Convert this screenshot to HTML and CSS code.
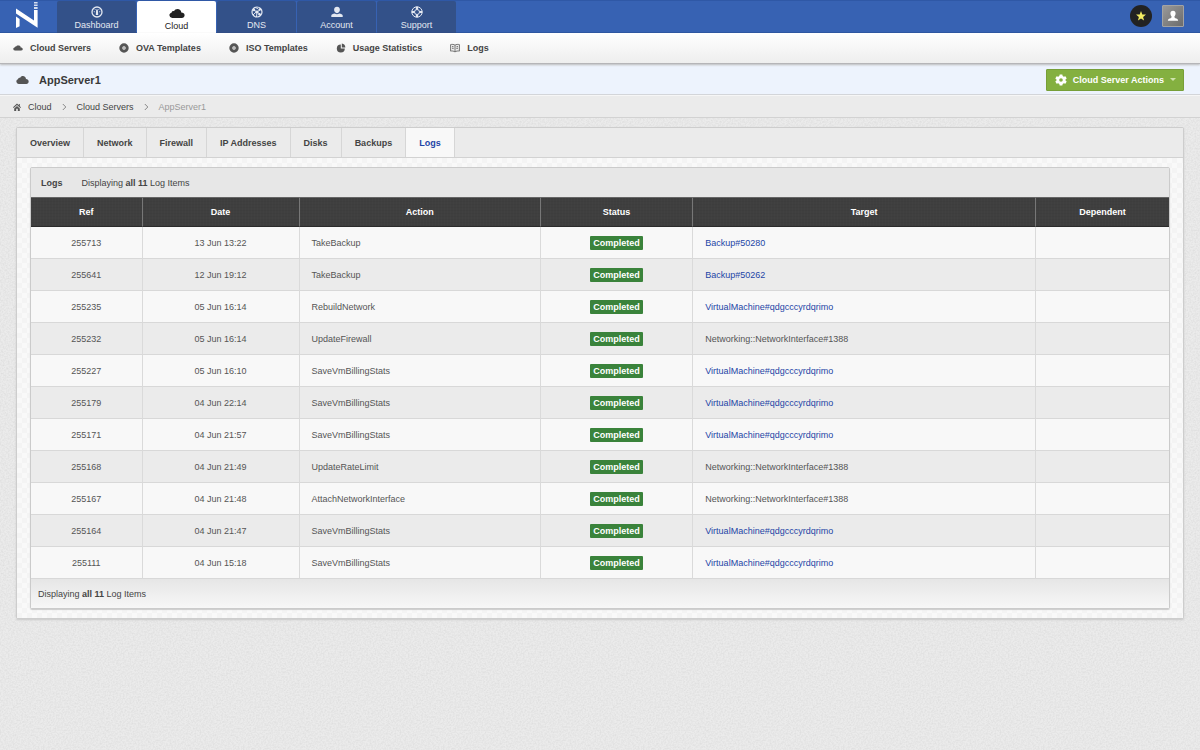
FILE: index.html
```html
<!DOCTYPE html>
<html lang="en">
<head>
<meta charset="utf-8">
<title>AppServer1 - Logs</title>
<link rel="stylesheet" href="styles.css">
</head>
<body>
<svg class="defs" aria-hidden="true">
  <symbol id="cloud" viewBox="0 0 16 9"><path d="M3.6 9A3.1 3.1 0 0 1 .4 6.2C.4 4.9 1.300 4 2.500 3.700 2.700 2.400 4 1.800 5 2.200 5.700.8 7 .1 8.500.1c2.100 0 3.700 1.500 3.800 3.400 1.900 0 3.300 1.100 3.300 2.700S14.400 9 12.800 9z"/></symbol>
  <symbol id="disc" viewBox="0 0 10 10"><circle cx="5" cy="5" r="3.200" fill="none" stroke="#555" stroke-width="3"/><circle cx="5" cy="5" r=".7"/></symbol>
</svg>

<header class="topbar">
  <a class="logo" href="#" aria-label="Home">
    <svg width="24" height="30" viewBox="0 0 24 30"><g fill="#fff"><path d="M1 8.500L19 20.500V10h3.600v17.800L1 13.500z"/><path d="M1 16.500l3.600 2.400v7.300L1 28z"/><path d="M19 7h3.600v2H19zM19 4.500h3.600V6H19zM19 2h3.600v1.500H19z" opacity=".8"/></g></svg>
  </a>
  <nav class="main-nav">
    <a href="#"><svg width="12" height="12" viewBox="0 0 12 12"><circle cx="6" cy="6" r="5" fill="none" stroke="currentColor" stroke-width="1.300"/><path fill="currentColor" d="M5.200 3.500h1.600L7.200 9H4.800z"/><path d="M2.800 5.500l1 .4M4 3.200l.4.700M8 3.200l-.4.700M9.200 5.500l-1 .4" stroke="currentColor"/></svg>Dashboard</a>
    <a href="#" class="active"><svg width="16" height="12" viewBox="0 -2 16 12" fill="currentColor"><use href="#cloud" width="16" height="9"/></svg>Cloud</a>
    <a href="#"><svg width="12" height="12" viewBox="0 0 12 12" fill="none" stroke="currentColor"><circle cx="6" cy="6" r="5" stroke-width="1.200"/><path d="M2 3.500l4 2.500 4-2.800M6 6l-.5 5M2 9l3.500-3.300M6 6l4 2.800M4 1.500l3 1"/><g fill="currentColor" stroke="none"><circle cx="6" cy="6" r="1.400"/><circle cx="3" cy="4" r="1.200"/><circle cx="8.700" cy="3.500" r="1.200"/><circle cx="8.500" cy="8.300" r="1.200"/></g></svg>DNS</a>
    <a href="#"><svg width="12" height="12" viewBox="0 0 12 12" fill="currentColor"><path d="M6 .8c1.800 0 2.900 1.300 2.900 3S7.700 7.200 6 7.200 3.100 5.500 3.100 3.800 4.200.8 6 .8zM.3 11V9.600C.3 8.500 2 7.700 3.800 7.500c1.200 1 3.200 1 4.400 0 1.800.2 3.500 1 3.500 2.100V11z"/></svg>Account</a>
    <a href="#"><svg width="12" height="12" viewBox="0 0 12 12" fill="none" stroke="currentColor"><circle cx="6" cy="6" r="5.200"/><circle cx="6" cy="6" r="2.500"/><path stroke-width="2.200" d="M6 .8v2.700M6 8.500v2.700M.8 6h2.700M8.500 6h2.700"/></svg>Support</a>
  </nav>
  <div class="user-tools">
    <button class="star" aria-label="Favourites"><svg width="10" height="10" viewBox="0 0 10 10"><path fill="#f2ec62" d="M5 0l1.300 3.500 3.700.1-2.900 2.300 1 3.700L5 7.500 1.900 9.600l1-3.700L0 3.600l3.700-.1z"/></svg></button>
    <button class="avatar" aria-label="Profile"><svg width="12" height="12" viewBox="0 0 12 12"><path fill="#fff" d="M6 .7c1.700 0 2.700 1.200 2.600 2.900C8.500 5 8 6 7.400 6.600c0 1.300.4 1.500 1.900 2 1 .3 1.700.9 1.800 2.200H.9C1 9.500 1.700 8.900 2.700 8.600c1.500-.5 1.900-.7 1.900-2C4 6 3.500 5 3.400 3.600 3.300 1.900 4.300.7 6 .7z"/></svg></button>
  </div>
</header>

<nav class="sub-nav">
  <a href="#"><svg width="10" height="10" viewBox="0 -3 16 15"><use href="#cloud" width="16" height="9"/></svg>Cloud Servers</a>
  <a href="#"><svg width="10" height="10"><use href="#disc"/></svg>OVA Templates</a>
  <a href="#"><svg width="10" height="10"><use href="#disc"/></svg>ISO Templates</a>
  <a href="#"><svg width="10" height="10" viewBox="0 0 10 10"><path d="M4.800 1.400v4h4A4 4 0 1 1 4.800 1.400z"/><path d="M5.800.4A4 4 0 0 1 9.300 4.400H5.800z"/></svg>Usage Statistics</a>
  <a href="#"><svg width="10" height="10" viewBox="0 0 10 10"><path fill="#eee" stroke="#666" stroke-width=".9" d="M5 2.200C3.800 1.300 2 1.200.6 1.600v6.500C2 7.800 3.800 8 5 8.900c1.200-.9 3-1.100 4.400-.8V1.600C8 1.200 6.200 1.300 5 2.200zM5 2.200v6.500M2 3.500l1.600.3M2 5.200l1.600.3M8 3.500l-1.600.3M8 5.200l-1.600.3"/></svg>Logs</a>
</nav>

<div class="title-bar">
  <svg width="13" height="8" viewBox="0 0 16 9" preserveAspectRatio="none"><use href="#cloud"/></svg>
  <h1>AppServer1</h1>
  <button class="actions"><svg width="12" height="12" viewBox="0 0 12 12"><path fill="#fff" fill-rule="evenodd" d="M4.700.5h2.600l.4 1.600 1.100.6 1.600-.5 1.300 2.200L10.500 5.600v.8l1.200 1.200-1.300 2.200-1.600-.5-1.100.6-.4 1.600H4.700l-.4-1.600-1.100-.6-1.600.5L.3 7.600l1.200-1.200v-.8L.3 4.400l1.300-2.200 1.600.5 1.100-.6zM6 4.200a1.800 1.800 0 1 0 0 3.600 1.800 1.800 0 0 0 0-3.600z"/></svg>Cloud Server Actions<span class="caret"></span></button>
</div>

<nav class="breadcrumb" aria-label="Breadcrumb">
  <svg width="8" height="8" viewBox="0 0 8 8"><path fill="#555" d="M4 .6L0 4.300l.7.700L4 2l3.300 3 .7-.7L6.800 3.200V1H5.800v1.300zM4 3L1.200 5.500V8h2V5.800h1.600V8h2V5.500z"/></svg>
  <a href="#">Cloud</a>
  <svg width="5" height="8" viewBox="0 0 5 8"><path d="M.8 1l3 3-3 3" fill="none" stroke="#888"/></svg>
  <a href="#">Cloud Servers</a>
  <svg width="5" height="8" viewBox="0 0 5 8"><path d="M.8 1l3 3-3 3" fill="none" stroke="#888"/></svg>
  <span class="current">AppServer1</span>
</nav>

<main class="panel">
  <nav class="tabs">
    <a href="#">Overview</a><a href="#">Network</a><a href="#">Firewall</a><a href="#">IP Addresses</a><a href="#">Disks</a><a href="#">Backups</a><a href="#" class="active">Logs</a>
  </nav>
  <div class="panel-body">
    <section class="log-box">
      <div class="log-head"><h2>Logs</h2><p>Displaying <b>all 11</b> Log Items</p></div>
      <table>
        <colgroup><col class="c-ref"><col class="c-date"><col class="c-action"><col class="c-status"><col class="c-target"><col class="c-dep"></colgroup>
        <thead><tr><th>Ref</th><th>Date</th><th>Action</th><th>Status</th><th>Target</th><th>Dependent</th></tr></thead>
        <tbody>
          <tr><td>255713</td><td>13 Jun 13:22</td><td>TakeBackup</td><td><span class="badge">Completed</span></td><td><a href="#">Backup#50280</a></td><td></td></tr>
          <tr><td>255641</td><td>12 Jun 19:12</td><td>TakeBackup</td><td><span class="badge">Completed</span></td><td><a href="#">Backup#50262</a></td><td></td></tr>
          <tr><td>255235</td><td>05 Jun 16:14</td><td>RebuildNetwork</td><td><span class="badge">Completed</span></td><td><a href="#">VirtualMachine#qdgcccyrdqrimo</a></td><td></td></tr>
          <tr><td>255232</td><td>05 Jun 16:14</td><td>UpdateFirewall</td><td><span class="badge">Completed</span></td><td>Networking::NetworkInterface#1388</td><td></td></tr>
          <tr><td>255227</td><td>05 Jun 16:10</td><td>SaveVmBillingStats</td><td><span class="badge">Completed</span></td><td><a href="#">VirtualMachine#qdgcccyrdqrimo</a></td><td></td></tr>
          <tr><td>255179</td><td>04 Jun 22:14</td><td>SaveVmBillingStats</td><td><span class="badge">Completed</span></td><td><a href="#">VirtualMachine#qdgcccyrdqrimo</a></td><td></td></tr>
          <tr><td>255171</td><td>04 Jun 21:57</td><td>SaveVmBillingStats</td><td><span class="badge">Completed</span></td><td><a href="#">VirtualMachine#qdgcccyrdqrimo</a></td><td></td></tr>
          <tr><td>255168</td><td>04 Jun 21:49</td><td>UpdateRateLimit</td><td><span class="badge">Completed</span></td><td>Networking::NetworkInterface#1388</td><td></td></tr>
          <tr><td>255167</td><td>04 Jun 21:48</td><td>AttachNetworkInterface</td><td><span class="badge">Completed</span></td><td>Networking::NetworkInterface#1388</td><td></td></tr>
          <tr><td>255164</td><td>04 Jun 21:47</td><td>SaveVmBillingStats</td><td><span class="badge">Completed</span></td><td><a href="#">VirtualMachine#qdgcccyrdqrimo</a></td><td></td></tr>
          <tr><td>255111</td><td>04 Jun 15:18</td><td>SaveVmBillingStats</td><td><span class="badge">Completed</span></td><td><a href="#">VirtualMachine#qdgcccyrdqrimo</a></td><td></td></tr>
        </tbody>
      </table>
      <div class="log-foot">Displaying <b>all 11</b> Log Items</div>
    </section>
  </div>
</main>
</body>
</html>
```

FILE: styles.css
```css
* { box-sizing: border-box; }

body {
  margin: 0;
  min-height: 100vh;
  font: 9px/12px "Liberation Sans", Arial, sans-serif;
  color: #444;
  background-color: #ebebeb;
  background-image: url("data:image/svg+xml,%3Csvg xmlns='http://www.w3.org/2000/svg' width='200' height='200'%3E%3Cfilter id='n'%3E%3CfeTurbulence type='fractalNoise' baseFrequency='.6' numOctaves='2' stitchTiles='stitch'/%3E%3CfeColorMatrix values='0 0 0 0 0  0 0 0 0 0  0 0 0 0 0  .11 0 0 0 -.04'/%3E%3C/filter%3E%3Crect width='200' height='200' filter='url(%23n)'/%3E%3C/svg%3E");
}

a { color: inherit; text-decoration: none; }
button { font: inherit; border: 0; padding: 0; }
h1, h2, p { margin: 0; }
.defs { position: absolute; width: 0; height: 0; }

/* Top bar */
.topbar {
  display: flex;
  height: 33px;
  background: #3762b3;
  box-shadow: inset 0 1px #2f58a6, inset 0 -1px #2450a0;
}
.logo { width: 57px; padding-left: 15px; }
.main-nav { display: flex; gap: 1px; padding-top: 1px; }
.main-nav a {
  display: flex;
  flex-direction: column;
  align-items: center;
  gap: 1px;
  width: 79px;
  padding-top: 5px;
  color: #e3e8f1;
  background: #335189;
  border-radius: 2px 2px 0 0;
  box-shadow: inset 0 -1px #284682;
}
.main-nav a.active { color: #222; background: #fff; box-shadow: none; padding-top: 6px; }
.user-tools { display: flex; gap: 10px; align-items: center; margin-left: auto; padding: 0 16px 2px 0; }
.user-tools button { display: grid; place-items: center; width: 22px; height: 22px; }
.star { background: #222; border-radius: 50%; }
.avatar { background: linear-gradient(135deg, #999, #6c6c6c); border: 1px solid #a3a3a3; border-radius: 1px; }

/* Section navigation */
.sub-nav {
  display: flex;
  align-items: center;
  gap: 28px;
  height: 31px;
  padding: 0 13px;
  font-weight: bold;
  background: linear-gradient(#fff, #eee);
  border-bottom: 1px solid #b5b5b8;
  box-shadow: 0 1px 2px #bbb;
  position: relative;
}
.sub-nav a { display: flex; align-items: center; gap: 7px; }
.sub-nav svg, .title-bar > svg { fill: #555; }

/* Title */
.title-bar {
  display: flex;
  align-items: center;
  gap: 10px;
  height: 31px;
  padding: 1px 16px 0;
  background: #edf3fd;
  border-bottom: 1px solid #d3d5d9;
}
.title-bar h1 { font-size: 11px; line-height: 14px; color: #3a3a3a; }
.actions {
  display: flex;
  align-items: center;
  gap: 6px;
  margin-left: auto;
  height: 22px;
  padding: 0 7px 0 8px;
  color: #fff;
  font-weight: bold;
  background: #84b040;
  border: 1px solid #779f38;
  border-radius: 1px;
}
.caret { border: 3px solid transparent; border-top-color: #cfe3ad; border-bottom: 0; }

.breadcrumb {
  display: flex;
  align-items: center;
  gap: 10px;
  height: 23px;
  padding: 0 13px;
  background: #ebebeb;
  border-top: 1px solid #f6f6f6;
  border-bottom: 1px solid #d2d2d2;
}
.breadcrumb > svg:first-child + a { margin-left: -3px; }
.breadcrumb .current { color: #999; }

/* Panel */
.panel {
  margin: 9px 16px;
  border: 1px solid #cdcdcd;
  border-radius: 2px;
  box-shadow: 0 1px 2px #c8c8c8;
}
.tabs { display: flex; background: #ebebeb; border-bottom: 1px solid #d2d2d2; font-weight: bold; }
.tabs a { padding: 9px 13px 8px; border-right: 1px solid #d6d6d6; }
.tabs .active { color: #1d45a6; background: #f8f8f8; }
.panel-body {
  padding: 9px 13px;
  background: repeating-conic-gradient(#f4f4f4 0 25%, #f9f9f9 0 50%) 0 0 / 10px 10px;
}
.log-box { border: 1px solid #cbcbcb; border-radius: 2px; box-shadow: 0 1px 1px #ccc; }
.log-head { display: flex; align-items: center; gap: 19px; height: 29px; padding: 0 10px; background: #e7e7e7; }
.log-head h2 { font-size: 9px; }

table { width: 100%; border-collapse: separate; border-spacing: 0; table-layout: fixed; }
.c-ref { width: 9.8%; }
.c-date { width: 13.8%; }
.c-action { width: 21.2%; }
.c-status { width: 13.4%; }
.c-target { width: 30.1%; }
.c-dep { width: 11.7%; }
th {
  height: 30px;
  padding: 0;
  color: #fff;
  background: repeating-linear-gradient(90deg, #ffffff03 0 1px, transparent 1px 3px), repeating-linear-gradient(#00000008 0 1px, transparent 1px 3px), #3f3f3f;
  border-right: 1px solid #777;
  border-top: 1px solid #666;
  border-bottom: 1px solid #2b2b2b;
}
td {
  height: 32px;
  padding: 0 12px;
  color: #555;
  text-align: center;
  background: #f8f8f8;
  border-right: 1px solid #dadada;
  border-bottom: 1px solid #d8d8d8;
}
th:last-child, td:last-child { border-right: 0; }
tr:nth-child(even) td { background: #ebebeb; }
td:nth-child(3), td:nth-child(5) { text-align: left; }
td a { color: #1d45a6; }
.badge { display: inline-block; padding: 1px 3px; color: #fff; font-weight: bold; background: #3a833b; border-radius: 1px; }
.log-foot { padding: 9px 7px 8px; background: linear-gradient(#e6e6e6, #f7f7f7); }
```
